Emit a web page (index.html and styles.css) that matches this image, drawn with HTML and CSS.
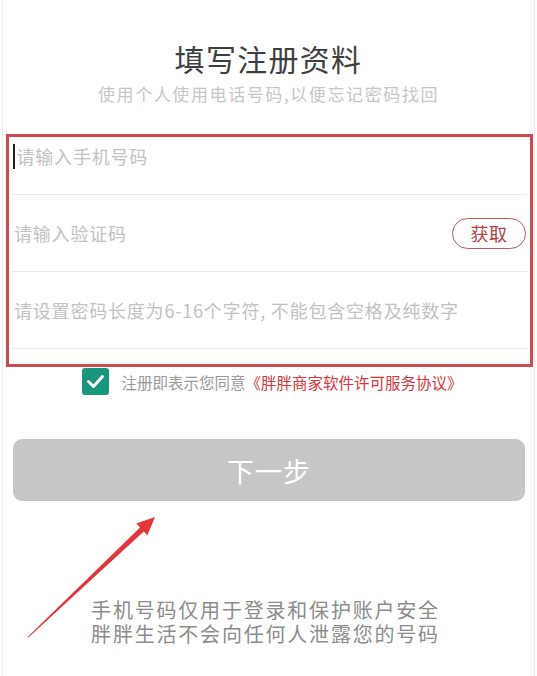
FILE: index.html
```html
<!DOCTYPE html>
<html lang="zh-CN">
<head>
<meta charset="utf-8">
<title>填写注册资料</title>
<link rel="stylesheet" href="styles.css">
</head>
<body>
<div class="page">
  <h1 class="title">填写注册资料</h1>
  <p class="subtitle">使用个人使用电话号码,以便忘记密码找回</p>

  <div class="form">
    <div class="row">
      <span class="caret"></span><span class="ph">请输入手机号码</span>
    </div>
    <div class="row">
      <span class="ph">请输入验证码</span>
      <button class="get">获取</button>
    </div>
    <div class="row">
      <span class="ph">请设置密码长度为6-16个字符, 不能包含空格及纯数字</span>
    </div>
  </div>

  <div class="agree">
    <span class="check">
      <svg width="27" height="27" viewBox="0 0 27 27"><path d="M6.5 13.5 L11.5 18.5 L20.5 8.5" fill="none" stroke="#fff" stroke-width="3" stroke-linecap="round" stroke-linejoin="round"/></svg>
    </span>
    <span class="agree-text">注册即表示您同意<span class="link">《胖胖商家软件许可服务协议》</span></span>
  </div>

  <button class="next">下一步</button>

  <div class="note">
    <p class="note-line">手机号码仅用于登录和保护账户安全</p>
    <p class="note-line">胖胖生活不会向任何人泄露您的号码</p>
  </div>

  <div class="mark"></div>
  <svg class="arrow" width="537" height="676" viewBox="0 0 537 676">
    <polygon points="27.6,636.9 140.0,527.4 136.4,523.6 155,517 147.4,535.2 143.8,531.4 28.4,637.4" fill="#e2363b"/>
  </svg>
</div>
</body>
</html>
```

FILE: styles.css
```css
* { box-sizing: border-box; }

html, body {
  margin: 0;
  padding: 0;
  background: #fff;
}

body {
  font-family: "Noto Sans CJK SC", "Noto Sans", sans-serif;
}

.page {
  position: relative;
  width: 537px;
  height: 676px;
  overflow: hidden;
  padding-top: 40px;
  background:
    linear-gradient(to right, #fff 2px, #f6eaea 2px, #f6eaea 3px, transparent 3px),
    linear-gradient(to left, #fff 2px, #f6eaea 2px, #f6eaea 3px, #fff 3px);
}

.title {
  margin: 0;
  font-size: 30px;
  line-height: 36px;
  font-weight: 400;
  color: #3f3f3f;
  text-align: center;
  letter-spacing: 1.3px;
}

.subtitle {
  margin: 6px 0 0;
  font-size: 17px;
  line-height: 24px;
  color: #c6c6c6;
  text-align: center;
  letter-spacing: 1.6px;
}

.form {
  margin: 12px 10px 0 12px;
}

.row {
  display: flex;
  align-items: center;
  height: 77px;
  padding: 0 1px 0 1px;
  border-bottom: 1px solid #ebebeb;
}

.caret {
  display: inline-block;
  width: 1.5px;
  height: 25px;
  background: #222;
  margin-right: 1px;
}

.ph {
  flex: 1;
  font-size: 18px;
  line-height: 24px;
  color: #c2c2c2;
  letter-spacing: 0.8px;
  padding-left: 1px;
}

.get {
  width: 74px;
  height: 31px;
  border: 1.5px solid #c2585b;
  border-radius: 16px;
  background: #fff;
  color: #b4403f;
  font-family: inherit;
  font-size: 18px;
  line-height: 1;
  padding: 0;
  letter-spacing: 0.5px;
}

.agree {
  display: flex;
  align-items: center;
  justify-content: center;
  gap: 12px;
  margin-top: 19px;
  padding-left: 8px;
}

.check {
  display: block;
  width: 27px;
  height: 27px;
  border-radius: 3px;
  background: #17957d;
}

.check svg { display: block; }

.agree-text {
  font-size: 15.5px;
  line-height: 22px;
  color: #9a9a9a;
}

.link { color: #d7353c; }

.next {
  display: block;
  width: 512px;
  height: 62px;
  margin: 44px 0 0 13px;
  border: none;
  border-radius: 9px;
  background: #c6c6c6;
  color: #fff;
  font-family: inherit;
  font-size: 27px;
  letter-spacing: 1px;
  padding: 0;
}

.note {
  margin-top: 97px;
  display: flex;
  flex-direction: column;
  align-items: center;
  gap: 0;
}

.note-line {
  margin: 0;
  height: 24px;
  font-size: 20px;
  line-height: 24px;
  color: #8c8c8c;
  letter-spacing: 1.8px;
  padding-right: 6px;
}

.mark {
  position: absolute;
  left: 6px;
  top: 134px;
  width: 527px;
  height: 233px;
  border: 3px solid #cd4a50;
  pointer-events: none;
}

.arrow {
  position: absolute;
  left: 0;
  top: 0;
  pointer-events: none;
}
```
